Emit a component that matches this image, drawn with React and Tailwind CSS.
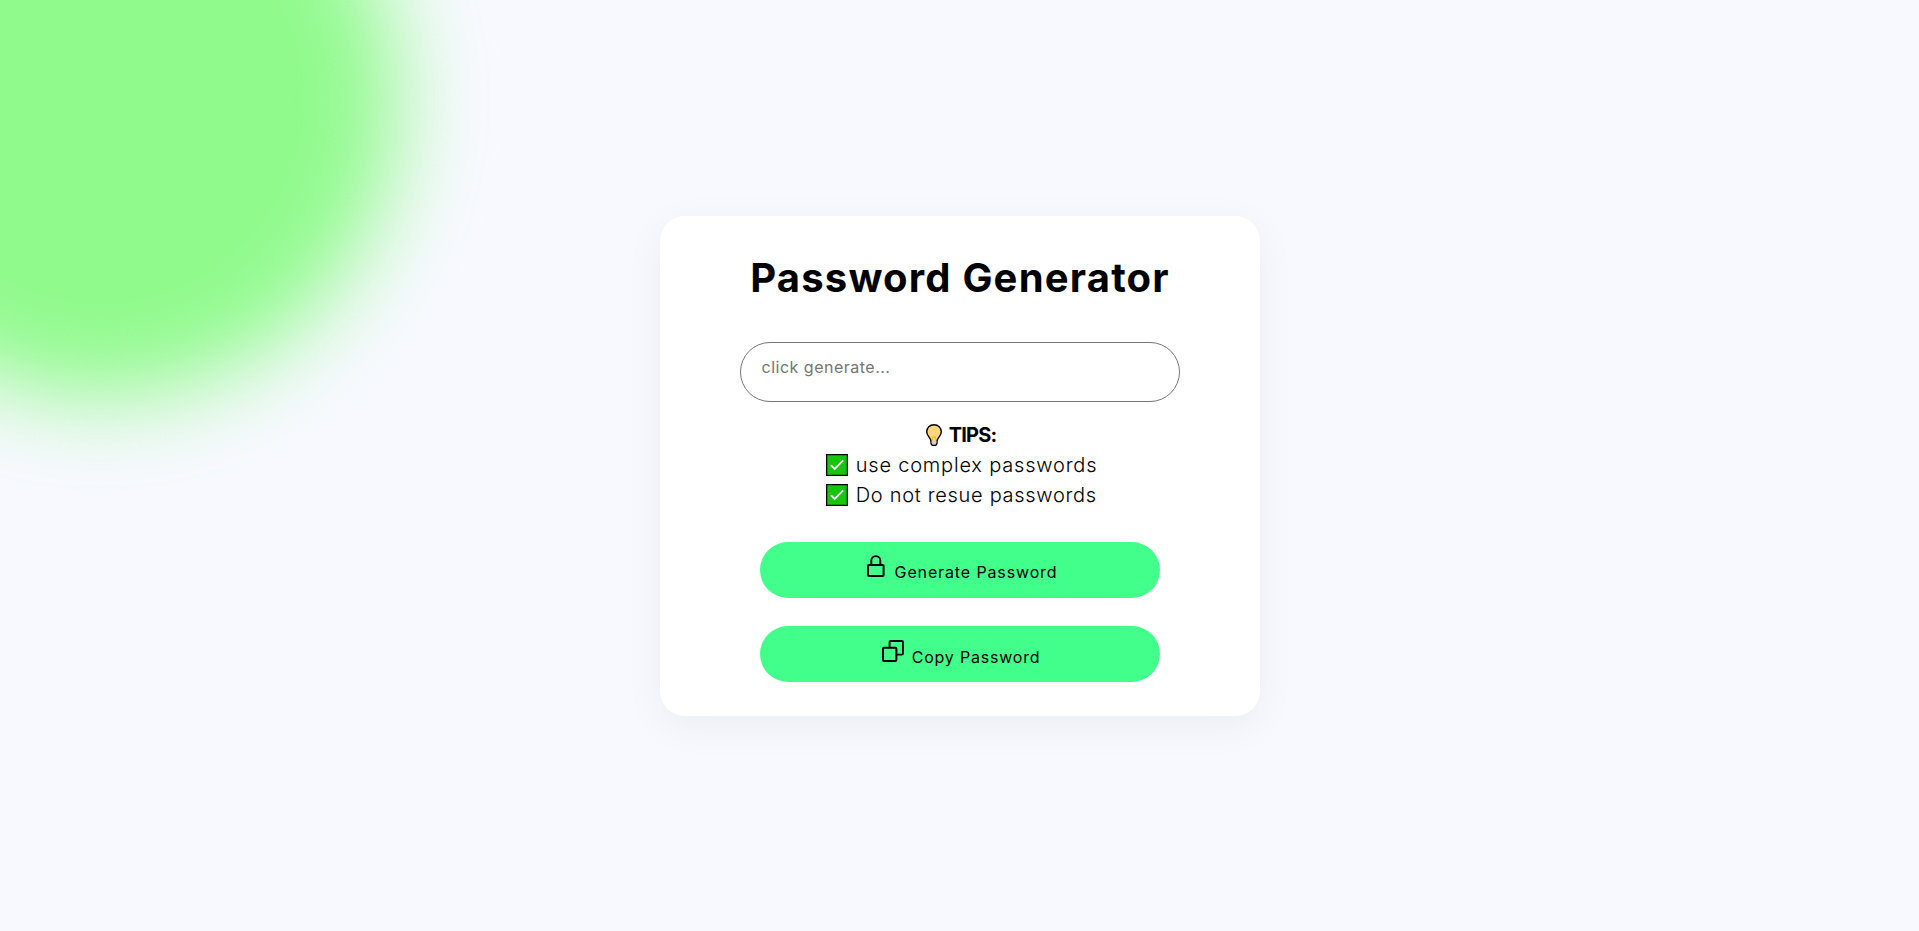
const checkBox = (
  <svg width="22" height="22" viewBox="0 0 22 22" className="shrink-0">
    <rect x="0.6" y="0.6" width="20.8" height="20.8" fill="#16c60c" stroke="#000" strokeWidth="1.3" />
    <path d="M4.8 11.1 L8.7 15 L17.2 6.4" fill="none" stroke="#fff" strokeWidth="1.9" />
  </svg>
);

function Bulb() {
  return (
    <svg width="16" height="22" viewBox="0 0 16 22" className="shrink-0">
      <path
        d="M8 .7C3.900.700.700 3.800.700 7.800c0 2.900 1.700 4.200 2.900 6 .800 1.100 1.400 2.300 1.400 3.700v1.400c0 1.500 1.200 2.400 3 2.400s3-.900 3-2.400v-1.400c0-1.400.600-2.600 1.400-3.700 1.200-1.800 2.900-3.100 2.900-6C15.300 3.800 12.100.700 8 .700Z"
        fill="#ffd679"
        stroke="#000"
        strokeWidth="1.400"
      />
      <path d="M5.700 16.500h4.600v2.400c0 1-.900 1.700-2.300 1.700s-2.300-.700-2.300-1.700Z" fill="#cfcfcf" />
      <path d="M6.400 12v4.300M9.600 12v4.300M6.400 13.500h3.200" stroke="#fdb900" strokeWidth="0.900" fill="none" />
    </svg>
  );
}

function Lock() {
  return (
    <svg width="18" height="22" viewBox="0 0 18 22" fill="none" stroke="#000" className="shrink-0">
      <rect x="1" y="9.900" width="15.600" height="11" rx="1" strokeWidth="2" />
      <path d="M4.300 9.800V5.600a4.500 4.500 0 0 1 9 0v4.200" strokeWidth="1.900" />
    </svg>
  );
}

function Copy() {
  return (
    <svg width="22" height="22" viewBox="0 0 22 22" fill="none" stroke="#000" className="shrink-0">
      <rect x="1" y="7.800" width="13.400" height="13.200" rx="1" strokeWidth="2" />
      <path d="M7.600 7.500V2a1 1 0 0 1 1-1h11.300a1 1 0 0 1 1 1v11.600a1 1 0 0 1-1 1h-5.200" strokeWidth="1.900" />
    </svg>
  );
}

export default function App() {
  return (
    <main className="relative flex h-screen items-center justify-center overflow-hidden bg-[#f8f9ff] font-['Inter',sans-serif] text-black">
      <div className="absolute -top-[225px] -left-[225px] size-[650px] rounded-full bg-[#90fa8c] opacity-15 blur-[50px]" />
      <div className="absolute -top-[191px] -left-[191px] size-[582px] rounded-full bg-[#90fa8c] blur-[42px]" />
      <section className="relative flex h-[500px] w-[600px] flex-col items-center rounded-[25px] bg-white pt-8 shadow-[0_10px_40px_rgba(0,0,0,0.05)]">
        <h1 className="h-[60px] pl-px text-[40px] leading-[60px] font-bold tracking-[1.2px] whitespace-nowrap">Password Generator</h1>
        <input
          readOnly
          placeholder="click generate..."
          className="mt-[34px] h-[60px] w-[440px] rounded-[30px] border border-[#767676] bg-white px-[21px] pb-[9px] text-base tracking-[0.5px] outline-none placeholder:text-[#757575]"
        />
        <div className="mt-[18px] flex flex-col items-start pl-[3px] text-xl leading-[30px] font-light">
          <div className="flex h-[30px] items-center gap-[7px] self-center font-bold">
            <Bulb />
            <span className="tracking-[-0.8px]">TIPS:</span>
          </div>
          <div className="flex h-[30px] items-center gap-2 pt-px pl-px whitespace-nowrap">
            {checkBox}
            <span className="tracking-[0.8px]">use complex passwords</span>
          </div>
          <div className="flex h-[30px] items-center gap-2 pt-px pl-px whitespace-nowrap">
            {checkBox}
            <span className="tracking-[0.7px]">Do not resue passwords</span>
          </div>
        </div>
        <button className="mt-8 flex h-14 w-[400px] items-start justify-center gap-[10px] rounded-full bg-[#42ff8b] pt-[13px] pl-[5px]">
          <Lock />
          <span className="mt-[5px] text-base leading-6 tracking-[0.87px]">Generate Password</span>
        </button>
        <button className="mt-7 flex h-14 w-[400px] items-start justify-center gap-2 rounded-full bg-[#42ff8b] pt-[14px] pl-[3px]">
          <Copy />
          <span className="mt-[5px] text-base leading-6 tracking-[0.8px]">Copy Password</span>
        </button>
      </section>
    </main>
  );
}
